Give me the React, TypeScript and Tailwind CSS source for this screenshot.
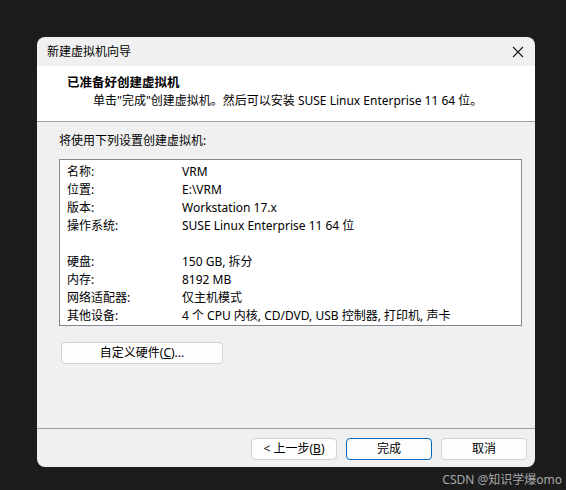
const rows: [string, string][] = [
  ["名称:", "VRM"],
  ["位置:", "E:\\VRM"],
  ["版本:", "Workstation 17.x"],
  ["操作系统:", "SUSE Linux Enterprise 11 64 位"],
  ["", ""],
  ["硬盘:", "150 GB, 拆分"],
  ["内存:", "8192 MB"],
  ["网络适配器:", "仅主机模式"],
  ["其他设备:", "4 个 CPU 内核, CD/DVD, USB 控制器, 打印机, 声卡"],
];

const font = { fontFamily: '"Noto Sans", "Noto Sans CJK SC", sans-serif' };

const App = () => {
  return (
    <div className="w-[566px] h-[490px] bg-[#1c1c1c] pt-[37px] pl-[37px] relative overflow-hidden" style={font}>
      <div className="w-[498px] h-[430px] bg-[#f0f0f0] rounded-[8px] overflow-hidden flex flex-col text-[12px] text-black">
        {/* title bar */}
        <div className="h-[29px] flex items-center justify-between pl-[10px] pr-[10px] shrink-0">
          <span className="text-[12px] leading-none">新建虚拟机向导</span>
          <svg width="12" height="12" viewBox="0 0 12 12" className="mr-[1px]">
            <path d="M1 1 L11 11 M11 1 L1 11" stroke="#1a1a1a" strokeWidth="1.1" />
          </svg>
        </div>

        {/* header */}
        <div className="h-[56px] bg-white border-b border-[#a0a0a0] shrink-0 pt-[8px]">
          <div className="pl-[30px] font-bold text-[12.5px] leading-[18px]">已准备好创建虚拟机</div>
          <div className="pl-[56px] leading-[18px]">单击"完成"创建虚拟机。然后可以安装 SUSE Linux Enterprise 11 64 位。</div>
        </div>

        {/* body */}
        <div className="flex-1 pl-[22px] pt-[10px]">
          <div className="leading-[18px]">将使用下列设置创建虚拟机:</div>
          <div className="mt-[9px] w-[463px] h-[167px] bg-white border border-[#828790] pl-[7px] pt-[3px]">
            {rows.map(([k, v], i) => (
              <div key={i} className="flex h-[18px] items-center">
                <span className="w-[115px] shrink-0">{k}</span>
                <span>{v}</span>
              </div>
            ))}
          </div>
          <button className="mt-[16px] ml-[2px] w-[162px] h-[22px] bg-[#fdfdfd] border border-[#d0d0d0] rounded-[4px] text-[12px] flex items-center justify-center">
            自定义硬件(<span className="underline">C</span>)...
          </button>
        </div>

        {/* footer */}
        <div className="h-[39px] border-t border-[#a0a0a0] shrink-0 flex justify-end items-start pt-[9px] pr-[8px] gap-[9px]">
          <button className="w-[86px] h-[22px] bg-[#fdfdfd] border border-[#d0d0d0] rounded-[4px] flex items-center justify-center">
            &lt; 上一步(<span className="underline">B</span>)
          </button>
          <button className="w-[86px] h-[22px] bg-[#fdfdfd] border border-[#0067c0] rounded-[4px] flex items-center justify-center">
            完成
          </button>
          <button className="w-[86px] h-[22px] bg-[#fdfdfd] border border-[#d0d0d0] rounded-[4px] flex items-center justify-center">
            取消
          </button>
        </div>
      </div>
      <div className="absolute right-[4px] bottom-[4px] text-[12px] text-[#a8a8a8] leading-none">CSDN @知识学爆omo</div>
    </div>
  );
};

export default App;
